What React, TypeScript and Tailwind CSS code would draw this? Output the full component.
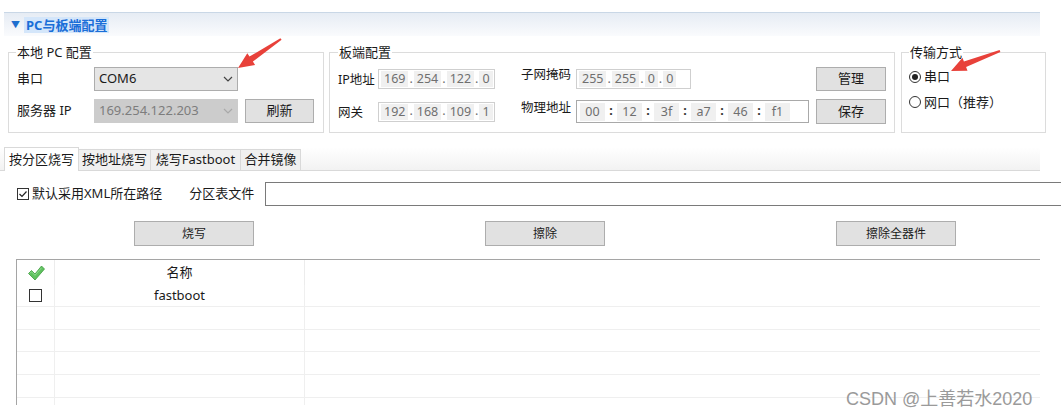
import React from "react";

const font = "font-['Noto_Sans','Noto_Sans_CJK_SC',sans-serif]";

function Btn({ label, className = "" }: { label: string; className?: string }) {
  return (
    <div
      className={`flex items-center justify-center bg-[#e1e1e1] border border-[#adadad] text-[12px] text-[#1a1a1a] ${className}`}
    >
      {label}
    </div>
  );
}

function SegBox({ parts, sep, className = "" }: { parts: string[]; sep: string; className?: string }) {
  return (
    <div className={`flex items-center h-[20px] border border-[#cfcfcf] bg-white px-[2px] text-[12.5px] text-[#6f6f6f] ${className}`}>
      {parts.map((p, i) => (
        <React.Fragment key={i}>
          {i > 0 && <span className="px-[1px] text-[#6f6f6f]">{sep}</span>}
          <span className="bg-[#f0f0f0] px-[3px] leading-[16px]">{p}</span>
        </React.Fragment>
      ))}
    </div>
  );
}

function Chevron({ color }: { color: string }) {
  return (
    <svg width="10" height="6" viewBox="0 0 10 6" fill="none">
      <path d="M1 1l4 4 4-4" stroke={color} strokeWidth="1.2" />
    </svg>
  );
}

function GreenCheck() {
  return (
    <svg width="18" height="18" viewBox="0 0 18 18">
      <path
        d="M1.5 9.5l3-3 3.5 3.5L14.5 2l3 3-9.5 11z"
        fill="#5fc25f"
        stroke="#3d9a3d"
        strokeWidth="0.8"
        strokeLinejoin="round"
      />
      <path d="M3 9.3l1.5-1.5 3.5 3.5 6.5-7.5" fill="none" stroke="#9be09b" strokeWidth="0.8" />
    </svg>
  );
}

function Radio({ on, label }: { on?: boolean; label: string }) {
  return (
    <div className="flex items-center gap-[3px] text-[13px] text-[#1a1a1a]">
      <div className="w-[12px] h-[12px] rounded-full border border-[#333] flex items-center justify-center bg-white">
        {on && <div className="w-[6px] h-[6px] rounded-full bg-[#222]" />}
      </div>
      <span>{label}</span>
    </div>
  );
}

export default function App() {
  const rowHeights = [23, 22, 23, 23, 23];
  return (
    <div className={`relative w-[1061px] h-[420px] bg-white overflow-hidden ${font} text-[#1a1a1a]`}>
      {/* header bar */}
      <div className="mt-[12px] ml-[4px] w-[1036px] h-[24px] border-t border-[#c9d7e6] bg-gradient-to-b from-[#e6ecf4] to-[#fafbfd] flex items-center">
        <span className="ml-[7px] text-[9px] text-[#1f6fcf]">▼</span>
        <span className="ml-[4px] bg-[#d4e6fa] px-[2px] text-[13px] font-bold text-[#1a6ed8] leading-[16px]">
          PC与板端配置
        </span>
      </div>

      {/* groups */}
      <div className="mt-[9px] flex">
        <fieldset className="ml-[8px] w-[316px] h-[88px] border border-[#dcdcdc] px-[8px]">
          <legend className="px-[1px] text-[13px] leading-[14px] -ml-[1px]">本地 PC 配置</legend>
          <div className="mt-[8px] flex items-center h-[24px]">
            <span className="w-[77px] text-[13px]">串口</span>
            <div className="w-[144px] h-[24px] border border-[#adadad] bg-[#e5e5e5] flex items-center justify-between px-[4px] text-[13px]">
              <span>COM6</span>
              <Chevron color="#444" />
            </div>
          </div>
          <div className="mt-[8px] flex items-center h-[24px]">
            <span className="w-[77px] text-[13px]">服务器 IP</span>
            <div className="w-[144px] h-[24px] border border-[#cccccc] bg-[#cccccc] flex items-center justify-between px-[4px] text-[13px] text-[#7d7d7d]">
              <span>169.254.122.203</span>
              <Chevron color="#a9a9a9" />
            </div>
            <Btn label="刷新" className="ml-[7px] w-[69px] h-[24px] text-[13px]" />
          </div>
        </fieldset>

        <fieldset className="ml-[5px] w-[566px] h-[88px] border border-[#dcdcdc] px-[8px]">
          <legend className="px-[1px] text-[13px] leading-[14px]">板端配置</legend>
          <div className="mt-[8px] flex items-center h-[24px]">
            <span className="w-[40px] text-[12.5px] pt-[2px]">IP地址</span>
            <SegBox parts={["169", "254", "122", " 0"]} sep="." className="w-[117px]" />
            <span className="ml-[26px] w-[55px] text-[12.5px] -mt-[8px]">子网掩码</span>
            <SegBox parts={["255", "255", " 0 ", " 0 "]} sep="." className="w-[115px]" />
            <Btn label="管理" className="ml-auto w-[70px] h-[24px] text-[13px]" />
          </div>
          <div className="mt-[8px] flex items-center h-[25px]">
            <span className="w-[40px] text-[12.5px] pt-[4px]">网关</span>
            <SegBox parts={["192", "168", "109", " 1"]} sep="." className="w-[117px]" />
            <span className="ml-[26px] w-[55px] text-[12.5px] -mt-[6px]">物理地址</span>
            <div className="w-[233px] h-[23px] border border-[#a9a9a9] bg-white flex items-center px-[3px] text-[12.5px] text-[#6f6f6f]">
              {["00", "12", "3f", "a7", "46", "f1"].map((p, i) => (
                <React.Fragment key={i}>
                  {i > 0 && <span className="w-[12px] text-center text-[#333] font-bold">:</span>}
                  <span className="bg-[#f0f0f0] w-[25px] text-center leading-[18px]">{p}</span>
                </React.Fragment>
              ))}
            </div>
            <Btn label="保存" className="ml-auto w-[70px] h-[25px] text-[13px]" />
          </div>
        </fieldset>

        <fieldset className="ml-[6px] w-[145px] h-[88px] border border-[#dcdcdc] px-[7px]">
          <legend className="px-[1px] text-[13px] leading-[14px]">传输方式</legend>
          <div className="mt-[8px]">
            <Radio on label="串口" />
          </div>
          <div className="mt-[6px]">
            <Radio label="网口（推荐）" />
          </div>
        </fieldset>
      </div>

      {/* tabs */}
      <div className="mt-[14px] flex items-end h-[24px] border-b border-[#d9d9d9] bg-gradient-to-b from-white to-[#f2f2f2] w-[1040px]">
        <div className="ml-[4px] w-[75px] h-[24px] -mb-[1px] bg-white border border-b-0 border-[#d9d9d9] flex items-center justify-center text-[13px]">
          按分区烧写
        </div>
        {[
          ["按地址烧写", "w-[72px]"],
          ["烧写Fastboot", "w-[90px]"],
          ["合并镜像", "w-[60px]"],
        ].map(([t, w]) => (
          <div
            key={t}
            className={`${w} h-[21px] bg-[#f0f0f0] border border-l-0 border-b-0 border-[#d9d9d9] flex items-center justify-center text-[13px]`}
          >
            {t}
          </div>
        ))}
      </div>

      {/* file row */}
      <div className="mt-[11px] flex items-center h-[24px]">
        <div className="ml-[17px] w-[12px] h-[12px] border border-[#333] bg-white flex items-center justify-center">
          <svg width="10" height="10" viewBox="0 0 10 10">
            <path d="M1.5 5l2.5 2.5 4.5-5" fill="none" stroke="#222" strokeWidth="1.2" />
          </svg>
        </div>
        <span className="ml-[3px] text-[13px]">默认采用XML所在路径</span>
        <span className="ml-[27px] text-[13px]">分区表文件</span>
        <div className="ml-[11px] flex-1 h-[24px] border border-[#7a7a7a] border-r-0 bg-white" />
      </div>

      {/* action buttons */}
      <div className="mt-[15px] flex h-[25px]">
        <Btn label="烧写" className="ml-[134px] w-[120px] h-[25px]" />
        <Btn label="擦除" className="ml-[231px] w-[120px] h-[25px]" />
        <Btn label="擦除全器件" className="ml-[231px] w-[120px] h-[25px]" />
      </div>

      {/* table */}
      <div className="mt-[13px] ml-[16px] w-[1024px] h-[146px] overflow-hidden border-l border-t border-[#a5a5a5]">
        <div className="flex h-[25px]">
          <div className="w-[38px] flex items-center justify-center border-r border-[#ececec]">
            <GreenCheck />
          </div>
          <div className="w-[250px] flex items-center justify-center border-r border-[#ececec] text-[13px]">名称</div>
          <div className="flex-1" />
        </div>
        <div className="flex h-[22px] border-b border-[#efefef]">
          <div className="w-[38px] flex items-center justify-center border-r border-[#efefef]">
            <div className="w-[13px] h-[13px] border border-[#333] bg-white" />
          </div>
          <div className="w-[250px] flex items-center justify-center border-r border-[#efefef] text-[13px]">fastboot</div>
          <div className="flex-1" />
        </div>
        {rowHeights.map((h, i) => (
          <div key={i} className={`flex ${h === 23 ? "h-[23px]" : "h-[22px]"} border-b border-[#efefef]`}>
            <div className="w-[38px] border-r border-[#efefef]" />
            <div className="w-[250px] border-r border-[#efefef]" />
            <div className="flex-1" />
          </div>
        ))}
      </div>

      {/* annotation arrows */}
      <svg className="absolute inset-0 pointer-events-none" width="1061" height="420">
        <polygon
          points="281.6,39.8 252.9,61.6 255.1,64.9 238,68 247.3,53.3 249.5,56.6 280.4,38.2"
          fill="#e8413a"
        />
        <polygon
          points="1000.4,51.9 966.1,67.1 967.5,70.8 951,71 962.5,57.8 963.9,61.5 999.6,50.1"
          fill="#e8413a"
        />
      </svg>

      {/* watermark */}
      <div className="absolute left-[846px] top-[389px] text-[18px] text-[#9a9a9a] font-['Liberation_Sans','Noto_Sans_CJK_SC',sans-serif] leading-[20px] whitespace-nowrap">
        CSDN @上善若水2020
      </div>
    </div>
  );
}
